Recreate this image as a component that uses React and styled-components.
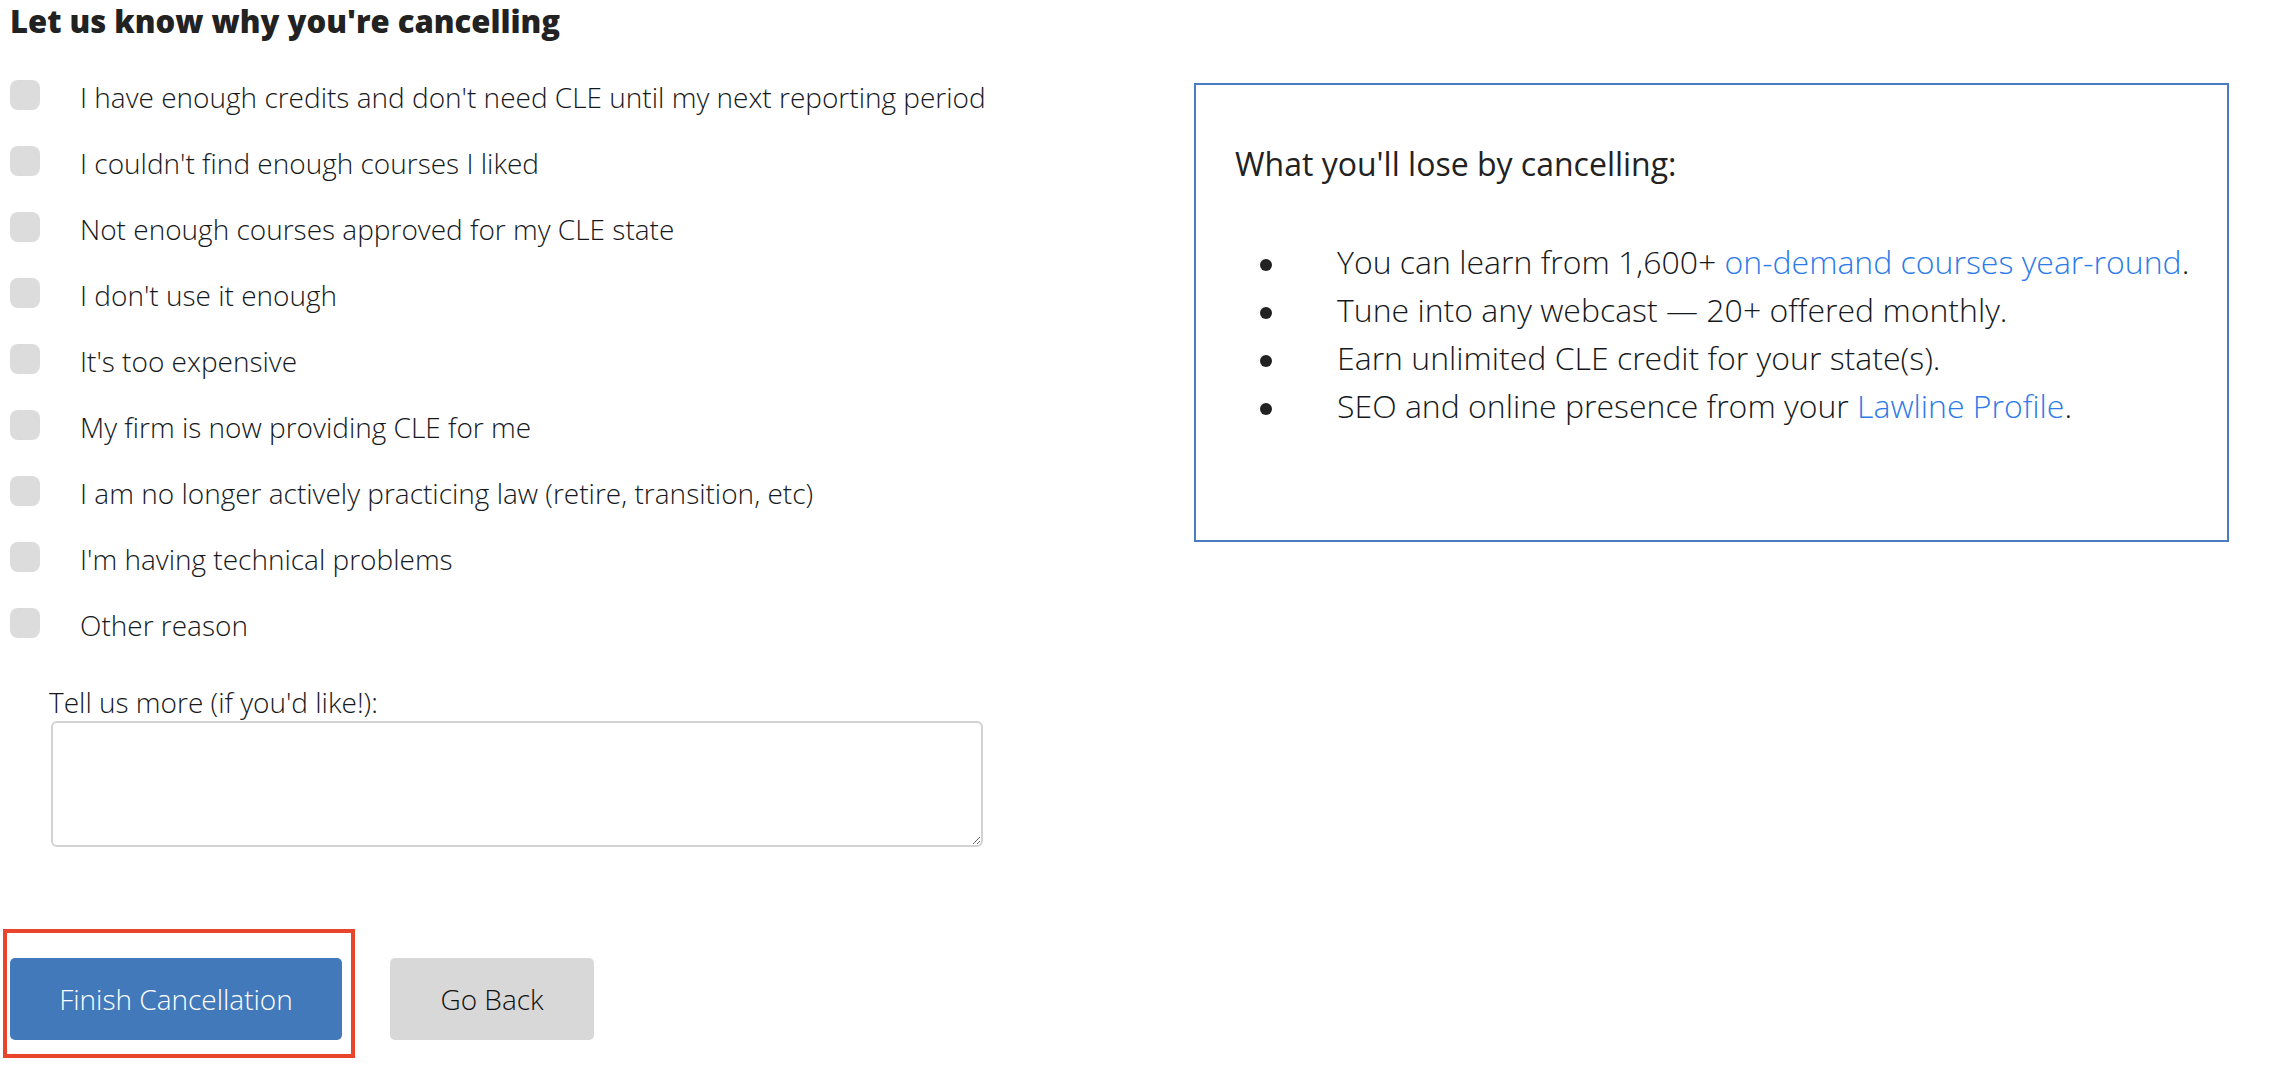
import React from "react";
import styled, { createGlobalStyle } from "styled-components";

const COLORS = {
  text: "#16191c",
  checkbox: "#dcdcdc",
  primary: "#4279bb",
  muted: "#d8d8d8",
  frame: "#4a7dbf",
  link: "#2d7be8",
  highlight: "#e9452c",
  field: "#d2d2d2",
};

const REASONS = [
  "I have enough credits and don't need CLE until my next reporting period",
  "I couldn't find enough courses I liked",
  "Not enough courses approved for my CLE state",
  "I don't use it enough",
  "It's too expensive",
  "My firm is now providing CLE for me",
  "I am no longer actively practicing law (retire, transition, etc)",
  "I'm having technical problems",
  "Other reason",
];

const GlobalStyle = createGlobalStyle`
  body {
    margin: 0;
    background: #fff;
    font-family: "Open Sans", "Liberation Sans", sans-serif;
    color: ${COLORS.text};
  }
`;

const App = () => {
  return (
    <>
      <GlobalStyle />
      <Page>
        <Form>
          <Heading>Let us know why you're cancelling</Heading>
          <ReasonList>
            {REASONS.map((reason) => (
              <Reason key={reason}>
                <Checkbox type="checkbox" />
                <ReasonText>{reason}</ReasonText>
              </Reason>
            ))}
          </ReasonList>
          <MoreLabel htmlFor="more">Tell us more (if you'd like!):</MoreLabel>
          <MoreField id="more" />
          <Actions>
            <Highlight>
              <Button variant="primary">Finish Cancellation</Button>
            </Highlight>
            <Button variant="secondary">Go Back</Button>
          </Actions>
        </Form>
        <LossCard>
          <LossTitle>What you'll lose by cancelling:</LossTitle>
          <LossList>
            <LossItem>
              You can learn from 1,600+ <Link href="#">on-demand courses year-round</Link>.
            </LossItem>
            <LossItem>Tune into any webcast — 20+ offered monthly.</LossItem>
            <LossItem>Earn unlimited CLE credit for your state(s).</LossItem>
            <LossItem>
              SEO and online presence from your <Link href="#">Lawline Profile</Link>.
            </LossItem>
          </LossList>
        </LossCard>
      </Page>
    </>
  );
};

const Page = styled.div`
  display: grid;
  grid-template-columns: 1184px 1035px;
  align-items: start;
  padding: 1px 0 0 10px;
`;

const Form = styled.form`
  display: flex;
  flex-direction: column;
  align-items: flex-start;
`;

const Heading = styled.h2`
  margin: 0;
  font-size: 31px;
  line-height: 40px;
  font-weight: 800;
  color: #222;
`;

const ReasonList = styled.div`
  margin-top: 23px;
  display: flex;
  flex-direction: column;
`;

const Reason = styled.label`
  display: flex;
  align-items: flex-start;
  height: 66px;
`;

const Checkbox = styled.input`
  appearance: none;
  margin: 16px 40px 0 0;
  width: 30px;
  height: 30px;
  border-radius: 8px;
  background: ${COLORS.checkbox};
  flex-shrink: 0;
`;

const ReasonText = styled.span`
  font-size: 28px;
  line-height: 66px;
  font-weight: 300;
`;

const MoreLabel = styled.label`
  margin: 26px 0 0 39px;
  font-size: 28px;
  line-height: 36px;
  font-weight: 300;
`;

const MoreField = styled.textarea`
  margin: 1px 0 0 41px;
  box-sizing: border-box;
  width: 932px;
  height: 126px;
  border: 2px solid ${COLORS.field};
  border-radius: 6px;
  font-family: inherit;
  font-size: 24px;
`;

const Actions = styled.div`
  margin: 82px 0 0 -7px;
  display: flex;
  align-items: flex-start;
  gap: 35px;
`;

const Highlight = styled.div`
  border: 4px solid ${COLORS.highlight};
  padding: 25px 9px 14px 3px;
`;

const Button = styled.button`
  height: 82px;
  border: none;
  border-radius: 5px;
  font-family: inherit;
  font-size: 28px;
  font-weight: 300;
  cursor: pointer;

  ${({ variant }) =>
    variant === "primary"
      ? `
        width: 332px;
        background: ${COLORS.primary};
        color: #fff;
      `
      : `
        width: 204px;
        margin-top: 29px;
        background: ${COLORS.muted};
        color: #111;
      `}
`;

const LossCard = styled.section`
  margin-top: 82px;
  height: 459px;
  box-sizing: border-box;
  border: 2px solid ${COLORS.frame};
  padding: 59px 0 0 39px;
`;

const LossTitle = styled.h3`
  margin: 0;
  font-size: 32px;
  line-height: 40px;
  font-weight: 400;
  color: #222;
`;

const LossList = styled.ul`
  margin: 54px 0 0;
  padding: 0 0 0 102px;
  list-style: none;
`;

const LossItem = styled.li`
  position: relative;
  font-size: 32px;
  line-height: 48px;
  font-weight: 300;

  &::before {
    content: "";
    position: absolute;
    left: -77px;
    top: 21px;
    width: 12px;
    height: 12px;
    border-radius: 50%;
    background: #222;
  }
`;

const Link = styled.a`
  color: ${COLORS.link};
  text-decoration: none;
`;

export default App;
